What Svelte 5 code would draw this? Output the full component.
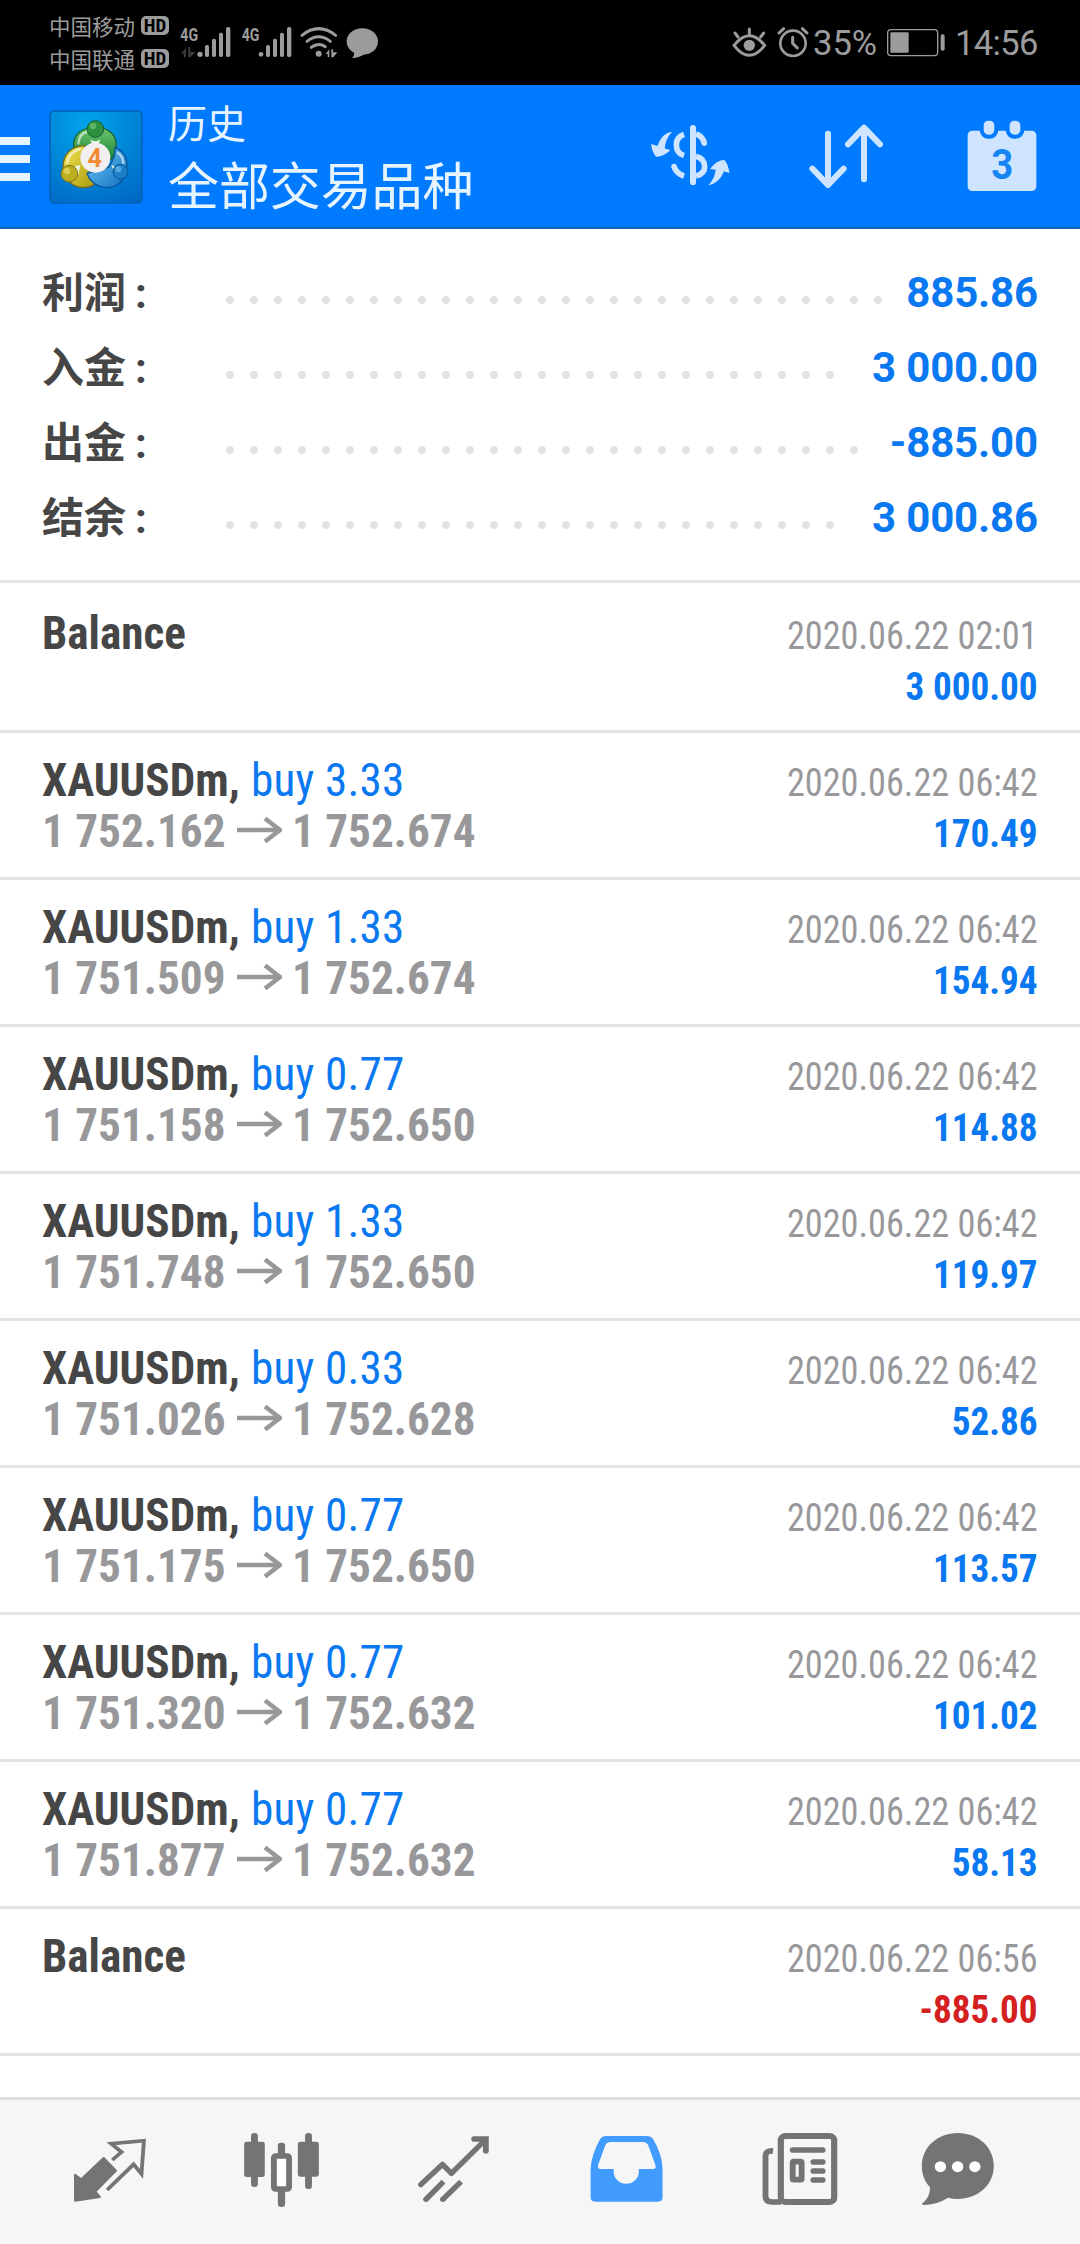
<script>
  const summary = [
    { label: '利润', value: '885.86', dots: 28 },
    { label: '入金', value: '3 000.00', dots: 26 },
    { label: '出金', value: '-885.00', dots: 27 },
    { label: '结余', value: '3 000.86', dots: 26 },
  ];

  const day = '2020.06.22';
  const trade = (lots, open, close, amount) => ({ lots, open, close, amount, time: '06:42' });
  const history = [
    { time: '02:01', amount: '3 000.00', first: true },
    trade('3.33', '1 752.162', '1 752.674', '170.49'),
    trade('1.33', '1 751.509', '1 752.674', '154.94'),
    trade('0.77', '1 751.158', '1 752.650', '114.88'),
    trade('1.33', '1 751.748', '1 752.650', '119.97'),
    trade('0.33', '1 751.026', '1 752.628', '52.86'),
    trade('0.77', '1 751.175', '1 752.650', '113.57'),
    trade('0.77', '1 751.320', '1 752.632', '101.02'),
    trade('0.77', '1 751.877', '1 752.632', '58.13'),
    { time: '06:56', amount: '-885.00', negative: true },
  ];
</script>

<div class="screen">
  <div class="status">
    <div class="carriers">
      <div class="carrier"><span>中国移动</span><b>HD</b></div>
      <div class="carrier"><span>中国联通</span><b>HD</b></div>
    </div>
    <svg class="signals" viewBox="528 60 618 135">
      <g fill="#9c9c9c">
        <text x="541" y="122" textLength="53" lengthAdjust="spacingAndGlyphs">4G</text>
        <text x="725" y="122" textLength="53" lengthAdjust="spacingAndGlyphs">4G</text>
        <circle cx="600" cy="163" r="8" />
        <rect x="615" y="135" width="12" height="36" rx="5" /><rect x="636" y="116" width="12" height="55" rx="5" />
        <rect x="657" y="98" width="12" height="73" rx="5" /><rect x="678" y="81" width="13" height="90" rx="5" />
        <circle cx="783" cy="163" r="7" />
        <rect x="798" y="135" width="12" height="36" rx="5" /><rect x="819" y="116" width="12" height="55" rx="5" />
        <rect x="840" y="98" width="12" height="73" rx="5" /><rect x="861" y="81" width="13" height="90" rx="5" />
        <circle cx="956" cy="161" r="9" />
        <path d="M976 163 L988 148 V171 H983 V161 Z M994 148 H999 V157 H1012 L1000 172 H994 Z" />
        <path d="M1087 85 C1113 85 1134 102 1134 124 C1134 149 1112 164 1091 164 C1080 170 1068 175 1056 174 C1062 169 1063 162 1062 158 C1049 151 1040 140 1040 124 C1040 102 1061 85 1087 85 Z" />
      </g>
      <path fill="#3c3c3c" d="M542 162 L558 143 V172 H551 V160 Z M565 141 H571 V156 H586 L571 172 H565 Z" />
      <g fill="none" stroke="#9c9c9c" stroke-width="9" stroke-linecap="round">
        <path d="M906 106 Q956 66 1007 106" /><path d="M921 124 Q956 97 991 124" /><path d="M934 142 Q956 126 976 140" />
      </g>
    </svg>
    <svg class="alerts" viewBox="90 60 240 135">
      <g fill="none" stroke="#9c9c9c" stroke-width="9" stroke-linecap="round">
        <path d="M102 136 Q148 78 194 136 Q148 196 102 136 Z" />
        <path d="M148 87 V102 M105 99 L114 111 M191 99 L182 111" />
        <circle cx="279" cy="130" r="38" stroke-width="8" />
        <path d="M237 99 L251 86 M321 99 L307 86" />
        <path d="M278 112 V130 L292 144" />
      </g>
      <circle cx="148" cy="136" r="17" fill="#9c9c9c" />
    </svg>
    <span class="percent">35%</span>
    <svg class="battery" viewBox="555 60 180 135">
      <rect x="560" y="89" width="150" height="78" rx="10" fill="none" stroke="#9c9c9c" stroke-width="4" />
      <rect x="568" y="97" width="55" height="61" rx="3" fill="#9c9c9c" />
      <rect x="719" y="103" width="12" height="49" rx="5" fill="#9c9c9c" />
    </svg>
    <span class="clock">14:56</span>
  </div>

  <header>
    <div class="menu"><i></i><i></i><i></i></div>
    <svg class="logo" viewBox="148 90 282 282">
      <defs>
        <radialGradient id="tile" cx=".4" cy=".15" r="1"><stop offset="0" stop-color="#00a4ea" /><stop offset="1" stop-color="#0067c4" /></radialGradient>
        <linearGradient id="green" x2="0" y2="1"><stop offset="0" stop-color="#6fc46a" /><stop offset="1" stop-color="#16823a" /></linearGradient>
        <linearGradient id="yellow" x2="1" y2="1"><stop offset="0" stop-color="#f4e54f" /><stop offset="1" stop-color="#a99a10" /></linearGradient>
        <linearGradient id="sky" x2="1" y2="1"><stop offset="0" stop-color="#74c8f4" /><stop offset="1" stop-color="#0c6fc0" /></linearGradient>
      </defs>
      <rect x="151" y="93" width="276" height="276" rx="14" fill="url(#tile)" stroke="#0461b8" stroke-width="5" />
      <path d="M222 203 C218 165 245 142 287 142 C329 142 352 165 350 203 C348 225 336 238 324 244 L304 196 L264 196 Z" fill="url(#green)" stroke="#17643a" stroke-width="4" />
      <path d="M255 197 C216 198 190 222 190 260 C192 300 222 326 258 322 C276 320 286 314 291 305 L262 268 Z" fill="url(#yellow)" stroke="#756e1b" stroke-width="4" />
      <path d="M346 202 C372 214 386 236 381 266 C376 306 347 326 314 322 C286 318 268 300 262 280 L326 262 C342 242 348 225 346 202 Z" fill="url(#sky)" stroke="#07569c" stroke-width="4" />
      <path d="M236 190 C238 168 250 158 264 155 M203 250 C205 226 222 212 242 207 M371 250 C370 234 363 224 354 218" fill="none" stroke="#fff" stroke-opacity=".6" stroke-width="7" stroke-linecap="round" />
      <path d="M272 178 Q287 190 302 178 L296 196 H278 Z M218 262 L242 254 L236 284 Z M336 256 L352 262 L344 280 Z" fill="#e9f6df" />
      <circle cx="287" cy="147" r="25" fill="#2d9140" stroke="#17643a" stroke-width="3" />
      <circle cx="280" cy="138" r="10" fill="#8bd283" fill-opacity=".55" />
      <circle cx="209" cy="281" r="25" fill="#bcae1e" stroke="#7a721b" stroke-width="3" />
      <circle cx="202" cy="273" r="10" fill="#f2ea84" fill-opacity=".55" />
      <circle cx="362" cy="275" r="22" fill="#1d7fc8" stroke="#07569c" stroke-width="3" />
      <circle cx="356" cy="268" r="9" fill="#86cdf4" fill-opacity=".55" />
      <circle cx="287" cy="233" r="45" fill="#f1eff0" />
      <text x="285" y="261" text-anchor="middle">4</text>
    </svg>
    <div class="titles">
      <div class="small">历史</div>
      <div class="large">全部交易品种</div>
    </div>
    <div class="actions">
      <svg viewBox="-24 -15 468 432">
        <path d="M219 114 V277" stroke-width="18" stroke-linecap="round" />
        <path d="M192 133 Q169 141 169 165 Q169 189 192 197 M162 229 Q168 251 192 258 M228 132 Q248 138 253 160 M228 199 Q254 206 254 230 Q254 251 228 258" stroke-width="17" />
        <circle cx="162" cy="229" r="8" class="fill" /><circle cx="253" cy="160" r="8" class="fill" />
        <path class="fill" d="M156 125 Q126 128 112 168 L93 162 Q96 186 108 200 Q128 202 151 181 L134 175 Q136 148 156 125 Z M265 286 Q298 280 312 244 L328 249 Q325 222 313 210 Q290 210 270 237 L287 239 Q285 264 265 286 Z" />
      </svg>
      <svg viewBox="444 -15 468 432">
        <path d="M624 131 V284 M577 236 L624 285 L671 236 M732 268 V114 M684 163 L732 113 L780 163" stroke-width="18" stroke-linecap="round" stroke-linejoin="round" />
      </svg>
      <svg viewBox="912 -15 468 432">
        <rect class="fill" x="1043" y="122" width="206" height="181" rx="14" />
        <rect class="tab" x="1085" y="86" width="44" height="54" rx="20" /><rect class="tab" x="1163" y="86" width="44" height="54" rx="20" />
        <text x="1147" y="266" text-anchor="middle" textLength="66" lengthAdjust="spacingAndGlyphs">3</text>
      </svg>
    </div>
  </header>

  <section class="summary">
    {#each summary as row}
      <div class="sum">
        <span class="label">{row.label}<span class="colon">:</span></span>
        <span class="dots" style="width: {row.dots * 24}px"></span>
        <span class="value">{row.value}</span>
      </div>
    {/each}
  </section>

  <main>
    {#each history as item}
      <div class="row" class:first={item.first}>
        <div class="left">
          {#if item.lots}
            <div class="title">XAUUSDm, <span class="buy">buy {item.lots}</span></div>
            <div class="prices">
              <span class="open">{item.open}</span>
              <svg viewBox="0 0 45 26"><path d="M0 13 H43 M28 1.5 L43 13 L28 24.5" /></svg>
              <span>{item.close}</span>
            </div>
          {:else}
            <div class="title">Balance</div>
          {/if}
        </div>
        <div class="right">
          <div class="date">{day} {item.time}</div>
          <div class="amount" class:negative={item.negative}>{item.amount}</div>
        </div>
      </div>
    {/each}
  </main>

  <nav>
    <svg viewBox="69.7 30 499.6 432" preserveAspectRatio="none">
      <path class="solid" stroke-width="6" stroke-linejoin="round" d="M301 204 L337 242 L277 305 L290 321 L218 332 V254 L236 268 Z" />
      <path d="M326 210 L353 186 L323 161 L418 152 L411 252 L388 223 L311 300" stroke-width="11" />
    </svg>
    <svg viewBox="569.2 30 499.6 432" preserveAspectRatio="none">
      <g class="solid">
        <rect x="709" y="155" width="60" height="106" rx="7" /><rect x="729" y="129" width="20" height="162" rx="9" />
        <rect x="865" y="155" width="61" height="105" rx="7" /><rect x="886" y="129" width="20" height="168" rx="9" />
        <rect x="807" y="158" width="21" height="45" rx="9" /><rect x="807" y="290" width="21" height="61" rx="9" />
      </g>
      <rect class="paper" x="795.5" y="198" width="44" height="99" rx="5" stroke-width="17" />
    </svg>
    <svg viewBox="1068.7 30 499.6 432" preserveAspectRatio="none">
      <path d="M1222 284 L1285 223 L1311 250 L1409 150" stroke-width="16" stroke-linecap="round" stroke-linejoin="round" />
      <path d="M1377 147 H1411 V182" stroke-width="17" stroke-linecap="round" />
      <path d="M1237 328 L1288 275 M1286 328 L1339 275" stroke-width="16" />
      <circle class="solid" cx="1237" cy="328" r="8" /><circle class="solid" cx="1286" cy="328" r="8" />
    </svg>
    <svg class="active" viewBox="0 30 499.6 432" preserveAspectRatio="none">
      <path class="solid" fill-rule="evenodd" d="M147 322 V235 Q149 195 175 146 Q180 138 190 138 H312 Q322 138 328 146 Q354 190 356 235 V322 Q356 335 343 335 H160 Q147 335 147 322 Z M207 156 Q194 156 190 165 L169 224 Q166 237 176 237 H214 V245 A36.500 36.500 0 0 0 287 245 V237 H328 Q339 237 335 224 L314 165 Q309 156 298 156 Z" />
    </svg>
    <svg viewBox="499.6 30 499.6 432" preserveAspectRatio="none">
      <rect x="699.5" y="138" width="155" height="198" rx="13" stroke-width="18" />
      <path d="M677 183 Q655 181 655 200 V318 Q655 336 675 336 H700" stroke-width="17" />
      <rect x="734" y="215" width="26" height="54" rx="3" stroke-width="17" />
      <path d="M734 180 H821 M794 216 H821 M794 243 H821 M794 270 H821" stroke-width="17" stroke-linecap="round" />
    </svg>
    <svg viewBox="999.1 30 499.6 432" preserveAspectRatio="none">
      <path class="solid" d="M1213 129 C1274 129 1318 172 1318 228 C1318 286 1270 327 1213 327 Q1198 327 1185 323 Q1155 344 1113 345 Q1106 343 1115 336 Q1132 322 1133 292 C1116 273 1109 252 1109 228 C1109 172 1155 129 1213 129 Z" />
      <g class="hole"><circle cx="1163" cy="230" r="16.500" /><circle cx="1213" cy="230" r="16.500" /><circle cx="1263" cy="230" r="16.500" /></g>
    </svg>
  </nav>
</div>

<style>
  :global(body) { background: #fff; }
  .screen {
    width: 1080px;
    height: 2244px;
    display: flex;
    flex-direction: column;
    overflow: hidden;
    background: #fff;
    font-family: Roboto, "Noto Sans CJK SC", sans-serif;
  }
  .screen > * { flex: none; box-sizing: border-box; }
  svg { display: block; flex: none; }

  .status { height: 85px; display: flex; background: #000; color: #9c9c9c; padding: 0 42px 0 49px; }
  .carriers { width: 127px; padding-top: 9px; box-sizing: border-box; }
  .carrier { display: flex; align-items: center; height: 33px; font-size: 21.5px; white-space: nowrap; }
  .carrier span { width: 92px; font-family: "Noto Sans CJK SC", sans-serif; line-height: 33px; }
  .carrier b { width: 28px; height: 19px; border-radius: 5px; background: #9c9c9c; color: #000; font-size: 19px; line-height: 19px; text-align: center; font-stretch: 75%; }
  .signals { width: 206px; height: 45px; margin-top: 20px; }
  .signals text { font-size: 56px; font-weight: 700; }
  .alerts { width: 80px; height: 45px; margin: 20px 0 0 auto; }
  .percent, .clock { font-size: 34.5px; line-height: 86px; }
  .percent { width: 73px; margin-left: 3px; }
  .battery { width: 60px; height: 45px; margin-top: 20px; }
  .clock { width: 83px; margin-left: 9px; letter-spacing: -0.6px; }

  header { height: 144px; display: flex; background: #007aff; border-bottom: 2px solid #1066bd; color: #e6f4ff; }
  .menu { width: 30px; display: flex; flex-direction: column; gap: 10px; padding-top: 52px; }
  .menu i { height: 8px; background: #e6f4ff; }
  .logo { width: 94px; height: 94px; margin: 25px 0 0 19px; }
  .logo text { font-size: 76px; font-weight: 700; fill: #f08a35; }
  .titles { margin-left: 25px; padding-top: 11px; font-family: "Noto Sans CJK SC", sans-serif; }
  .small { font-size: 39px; line-height: 50px; }
  .large { font-size: 51px; line-height: 74px; letter-spacing: -0.1px; }
  .actions { margin-left: auto; display: flex; }
  .actions svg { width: 156px; height: 144px; }
  .actions path, .actions rect { fill: none; stroke: #cfe5ff; }
  .actions .fill { fill: #cfe5ff; stroke: none; }
  .actions .tab { fill: #cfe5ff; stroke: #007aff; stroke-width: 12; }
  .actions text { fill: #1684f5; font-size: 130px; font-weight: 700; }

  .summary { padding: 26px 42px 25px; border-bottom: 3px solid #e3e3e3; height: 354px; }
  .sum { display: flex; height: 75px; line-height: 75px; font-size: 42px; font-weight: 700; color: #0a78f0; }
  .label { width: 176px; color: #464646; line-height: 77px; }
  .colon { margin-left: 9px; }
  .dots { background: radial-gradient(circle at 12px 45px, #e2e2e2 3.6px, transparent 4.4px) 0 0 / 24px 75px repeat-x; }
  .value { margin-left: auto; letter-spacing: -0.15px; }

  main { height: 1514px; }
  .row { height: 147px; box-sizing: border-box; border-bottom: 3px solid #e3e3e3; display: flex; justify-content: space-between; padding: 0 42px; line-height: 51px; white-space: nowrap; font-stretch: 75%; }
  .first { height: 150px; padding-top: 3px; }
  .left { padding-top: 21px; font-size: 47px; font-weight: 700; }
  .title { color: #464646; transform: scaleX(0.96); transform-origin: left; }
  .buy { color: #0a78f0; font-weight: 400; margin-left: 1px; letter-spacing: 0.2px; }
  .prices { display: flex; color: #98989b; }
  .prices span { transform: scaleX(0.962); transform-origin: left; }
  .prices svg { width: 45px; height: 26px; margin: 12px 10px 0 0; }
  .prices path { fill: none; stroke: #98989b; stroke-width: 4.5; }
  .prices .open { width: 195px; }
  .right { padding-top: 25px; font-size: 39px; text-align: right; }
  .date { color: #98989b; transform: scaleX(0.93); transform-origin: right; }
  .amount { color: #0a78f0; font-weight: 700; transform: scaleX(0.953); transform-origin: right; }
  .amount.negative { color: #d4201f; }

  nav { height: 147px; border-top: 3px solid #e0e0e0; background: #f6f6f6; display: flex; padding-left: 24px; }
  nav svg { width: 172px; height: 144px; }
  nav path, nav rect { fill: none; stroke: #747474; }
  nav circle, nav .solid, nav .solid rect { fill: #747474; stroke: none; }
  nav path.solid[stroke-width] { stroke: #747474; }
  nav .paper { fill: #fff; }
  nav .active .solid { fill: #429cff; }
  nav .hole circle { fill: #fff; }
</style>
